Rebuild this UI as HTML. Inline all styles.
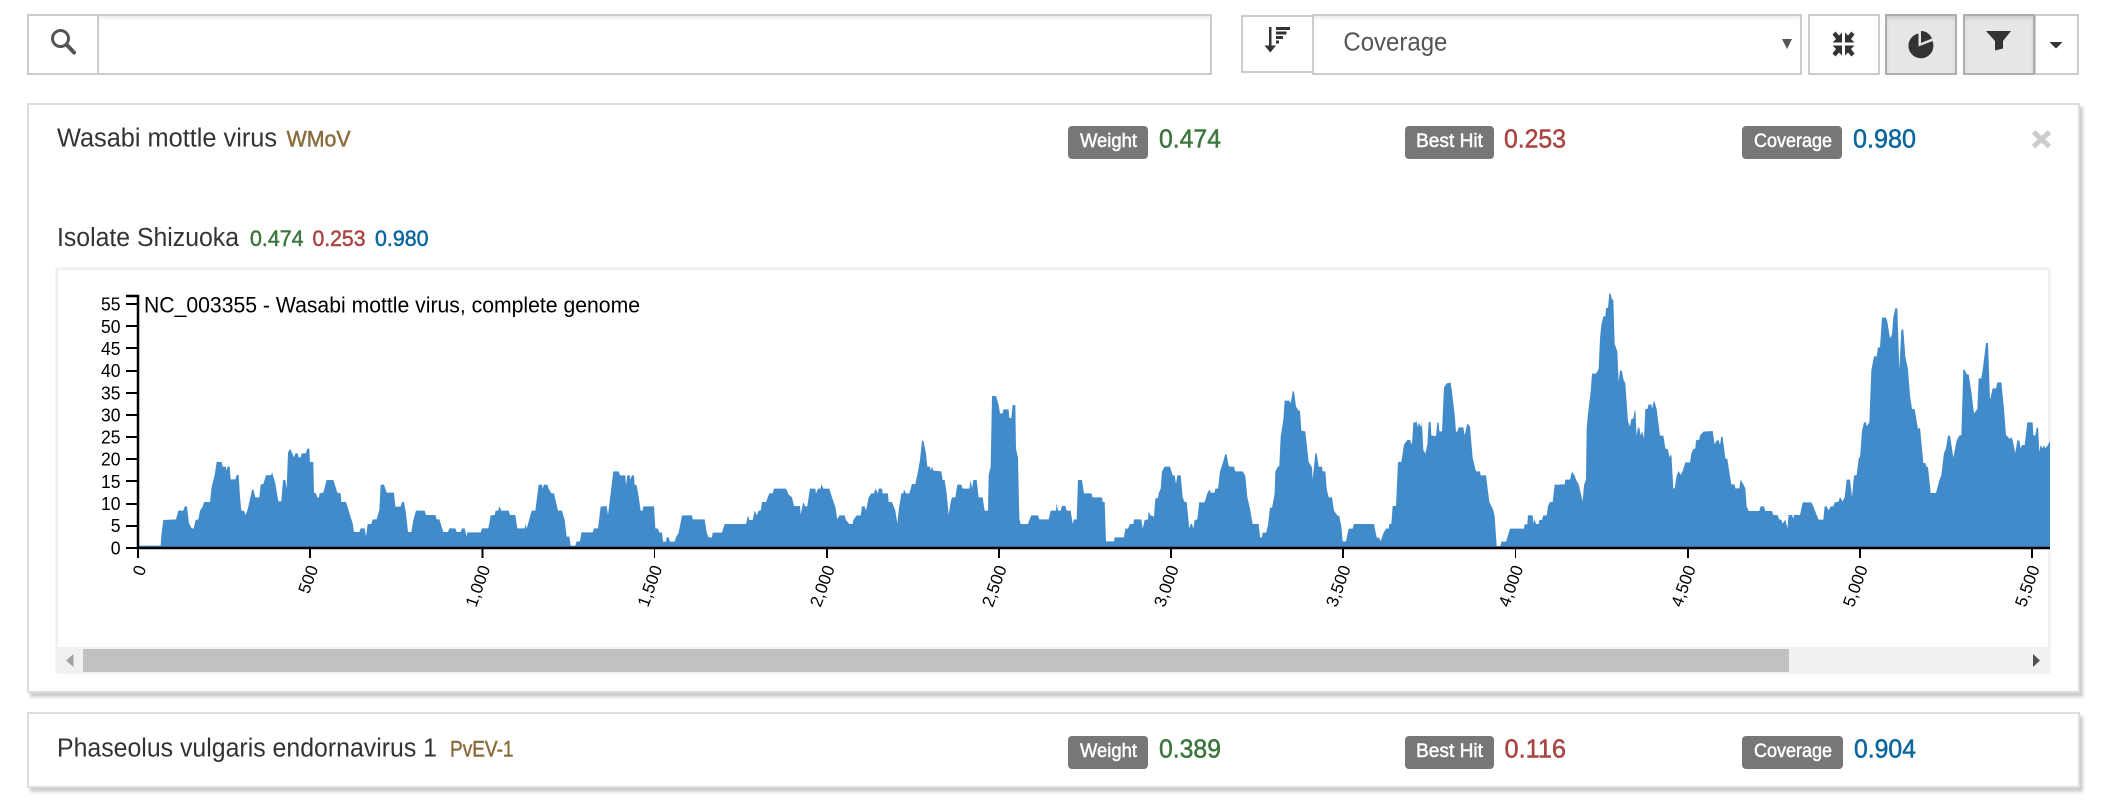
<!DOCTYPE html>
<html lang="en">
<head>
<meta charset="utf-8">
<title>Virus results</title>
<style>
html,body{margin:0;padding:0;background:#fff;width:2105px;height:803px;overflow:hidden;font-family:"Liberation Sans",sans-serif}
.b{position:absolute;box-sizing:border-box;border:2px solid #ccc;background:#fff}
.in{box-shadow:inset 0 3px 3px -1px rgba(0,0,0,.08)}
.on{background:#e6e6e6;border-color:#adadad;box-shadow:inset 0 3px 4px -1px rgba(0,0,0,.13)}
.card{position:absolute;box-sizing:border-box;left:27px;width:2053px;border:2px solid #ddd;background:#fff;box-shadow:3px 4px 3px rgba(0,0,0,.2)}
.panel{position:absolute;box-sizing:border-box;left:56px;top:268px;width:1994px;height:405px;background:#fff;border:2px solid #f0f0f0;box-shadow:0 0 2px rgba(0,0,0,.1)}
.track{position:absolute;left:56px;top:647px;width:1994px;height:26px;background:#f1f1f1}
.thumb{position:absolute;left:83px;top:649px;width:1706px;height:23px;background:#c1c1c1}
svg{position:absolute;left:0;top:0}
text{font-family:"Liberation Sans",sans-serif}
.m{stroke-width:.5px;paint-order:stroke}
</style>
</head>
<body>
<div class="b" style="left:27px;top:14px;width:72px;height:61px"></div>
<div class="b in" style="left:97px;top:14px;width:1115px;height:61px"></div>
<div class="b" style="left:1241px;top:15px;width:73px;height:58px"></div>
<div class="b in" style="left:1312px;top:14px;width:490px;height:61px"></div>
<div class="b" style="left:1808px;top:14px;width:72px;height:61px"></div>
<div class="b on" style="left:1885px;top:14px;width:72px;height:61px"></div>
<div class="b" style="left:2034px;top:14px;width:45px;height:61px"></div>
<div class="b on" style="left:1963px;top:14px;width:72px;height:61px"></div>

<div class="card" style="top:103px;height:590px"></div>
<div class="card" style="top:712px;height:76px"></div>
<div class="panel"></div>
<div class="track"></div>
<div class="thumb"></div>

<svg width="2105" height="803" viewBox="0 0 2105 803" xmlns="http://www.w3.org/2000/svg">
<!-- search icon -->
<circle cx="60.5" cy="38.5" r="8" fill="none" stroke="#555" stroke-width="3"/>
<path d="M66.5 44.5L74 52.5" stroke="#555" stroke-width="4" stroke-linecap="round" fill="none"/>
<!-- sort icon -->
<g fill="#333">
<rect x="1269" y="27" width="2.5" height="21"/>
<path d="M1264.5 45.5h11.5l-5.7 7z"/>
<rect x="1276" y="27" width="14" height="3"/>
<rect x="1276" y="31.5" width="10.5" height="3"/>
<rect x="1276" y="36" width="7" height="3"/>
<rect x="1276" y="40.5" width="3" height="3"/>
</g>
<text x="1343.4" y="50.7" font-size="26" fill="#555" textLength="104" lengthAdjust="spacingAndGlyphs">Coverage</text>
<path d="M1782 39h10l-5 10z" fill="#555"/>
<!-- compress icon -->
<g fill="#333" transform="translate(1843.5 44)">
<path d="M-1.5-1.5V-11.5L-4.5-8.5-8-12.5-11-9.5-7.5-5-11-1.5Z"/>
<path d="M1.5-1.5V-11.5L4.5-8.5 8-12.5 11-9.5 7.5-5 11-1.5Z"/>
<path d="M-1.5 1.5V11.5L-4.5 8.5-8 12.5-11 9.5-7.5 5-11 1.5Z"/>
<path d="M1.5 1.5V11.5L4.5 8.5 8 12.5 11 9.5 7.5 5 11 1.5Z"/>
</g>
<!-- pie icon -->
<path d="M1918.5 33.5A12.5 12.5 0 1 0 1932.5 41L1918.5 46.5Z" fill="#333"/>
<path d="M1921 31A12 12 0 0 1 1932 38.5L1921 43Z" fill="#333"/>
<!-- filter icon -->
<path d="M1986 31H2011L2003 41V48.5L1995 50.5V41Z" fill="#333"/>
<!-- caret -->
<path d="M2049.5 42H2062.5L2056 48.5Z" fill="#333"/>

<!-- card 1 header -->
<text x="57" y="146.7" font-size="25.5" fill="#333" textLength="220" lengthAdjust="spacingAndGlyphs">Wasabi mottle virus</text>
<text x="286.6" y="146.7" font-size="22" fill="#8a6d3b" stroke="#8a6d3b" class="m" textLength="64" lengthAdjust="spacingAndGlyphs">WMoV</text>

<rect x="1068" y="126" width="80" height="33" rx="4" fill="#777"/>
<text x="1080" y="147" font-size="19.5" fill="#fff" stroke="#fff" class="m" textLength="57" lengthAdjust="spacingAndGlyphs">Weight</text>
<text x="1159" y="147.7" font-size="26" fill="#3c763d" stroke="#3c763d" class="m" textLength="62" lengthAdjust="spacingAndGlyphs">0.474</text>
<rect x="1405" y="126" width="89" height="33" rx="4" fill="#777"/>
<text x="1416" y="147" font-size="19.5" fill="#fff" stroke="#fff" class="m" textLength="67" lengthAdjust="spacingAndGlyphs">Best Hit</text>
<text x="1504" y="147.7" font-size="26" fill="#a94442" stroke="#a94442" class="m" textLength="62" lengthAdjust="spacingAndGlyphs">0.253</text>
<rect x="1742" y="126" width="100" height="33" rx="4" fill="#777"/>
<text x="1754" y="147" font-size="19.5" fill="#fff" stroke="#fff" class="m" textLength="78" lengthAdjust="spacingAndGlyphs">Coverage</text>
<text x="1853" y="147.7" font-size="26" fill="#0a669e" stroke="#0a669e" class="m" textLength="63" lengthAdjust="spacingAndGlyphs">0.980</text>
<path d="M2033.5 132L2049.5 146.5M2049.5 132L2033.5 146.5" stroke="#ccc" stroke-width="5" fill="none"/>

<text x="57" y="246" font-size="25.5" fill="#333" textLength="182" lengthAdjust="spacingAndGlyphs">Isolate Shizuoka</text>
<text x="250" y="246" font-size="22" fill="#3c763d" stroke="#3c763d" class="m" textLength="53.5" lengthAdjust="spacingAndGlyphs">0.474</text>
<text x="312.5" y="246" font-size="22" fill="#a94442" stroke="#a94442" class="m" textLength="53" lengthAdjust="spacingAndGlyphs">0.253</text>
<text x="375" y="246" font-size="22" fill="#0a669e" stroke="#0a669e" class="m" textLength="53.5" lengthAdjust="spacingAndGlyphs">0.980</text>

<!-- coverage area -->
<g fill="#428bca">
<polygon transform="translate(130 380) scale(.33333)" points="26,503 26,497 92,497 94,465 100,420 138,418 145,392 160,392 165,378 171,380 177,430 185,445 191,445 197,420 205,418 210,392 218,380 222,366 240,366 245,320 254,285 260,246 275,246 278,260 287,260 289,272 293,260 299,260 302,298 316,298 320,285 326,285 330,350 334,392 342,392 346,405 352,392 358,366 366,330 370,328 376,352 388,352 392,314 400,312 408,286 424,285 426,276 436,310 445,364 454,364 459,300 466,300 470,326 474,218 480,206 486,218 492,232 496,220 503,220 506,232 512,232 515,220 527,220 532,206 538,206 540,246 550,246 552,338 558,340 562,352 567,352 569,340 580,338 590,300 610,300 622,338 632,340 634,366 648,366 656,392 668,430 672,456 688,456 692,445 704,445 708,470 713,432 724,432 728,418 740,418 748,390 752,314 762,314 770,338 792,338 796,380 812,380 816,366 822,366 828,400 834,456 844,456 850,420 858,392 884,392 888,405 916,405 920,418 928,418 940,456 954,456 958,445 976,445 980,456 992,456 996,445 1004,445 1010,470 1012,457 1052,457 1056,445 1075,445 1082,406 1094,405 1097,392 1105,392 1108,378 1114,392 1136,392 1140,405 1156,405 1162,445 1184,445 1186,432 1190,445 1194,432 1205,392 1216,392 1226,314 1236,314 1238,326 1242,314 1252,314 1256,326 1264,340 1272,340 1284,392 1296,392 1304,420 1310,470 1318,470 1322,497 1336,497 1340,484 1350,484 1354,457 1388,457 1392,445 1404,445 1412,380 1430,378 1434,405 1442,340 1450,274 1466,274 1470,286 1486,286 1488,316 1492,286 1500,286 1500,503"/>
<polygon transform="translate(630 380) scale(.33333)" points="0,503 0,300 6,286 12,286 14,314 20,316 26,350 32,392 38,392 40,379 72,379 76,445 84,446 88,458 96,458 99,485 108,485 110,472 116,472 120,485 134,485 138,472 146,458 156,406 186,406 188,418 224,418 230,458 236,472 246,472 248,458 276,458 284,432 348,432 354,406 358,420 368,420 374,392 380,406 386,392 392,392 396,366 408,366 418,340 428,340 432,326 468,326 476,344 486,352 492,378 510,378 512,404 520,366 526,380 532,378 540,326 556,326 558,340 564,326 572,326 574,312 580,326 598,326 606,352 616,380 622,418 628,406 644,406 648,420 658,432 668,432 670,420 680,406 692,406 696,379 704,379 708,392 716,352 724,340 732,340 736,326 744,340 746,326 756,326 758,340 774,340 776,366 786,366 796,392 802,430 806,392 814,340 820,340 822,328 828,340 838,340 846,312 856,312 864,274 870,240 876,182 880,182 888,220 892,260 900,260 902,272 906,260 910,272 934,274 938,300 944,300 950,340 956,404 962,366 966,352 976,352 982,314 994,314 998,326 1018,326 1022,300 1026,326 1030,300 1040,300 1046,352 1058,352 1060,366 1064,392 1074,392 1076,286 1082,260 1086,48 1098,48 1106,75 1110,100 1118,100 1120,88 1136,88 1138,114 1144,114 1148,75 1156,75 1158,206 1164,234 1168,415 1172,432 1194,432 1198,420 1204,406 1224,406 1228,418 1256,418 1262,392 1278,392 1280,370 1284,392 1292,392 1296,378 1306,378 1310,392 1322,392 1328,432 1332,418 1340,418 1344,300 1356,300 1362,340 1384,340 1388,352 1416,352 1418,366 1424,366 1428,484 1452,484 1454,472 1482,472 1486,446 1494,446 1500,432 1500,503"/>
<polygon transform="translate(1130 370) scale(.33333)" points="0,534 0,462 10,462 12,448 34,448 38,476 44,450 54,448 56,424 62,436 72,440 76,385 84,384 86,370 92,356 96,304 104,290 120,290 128,316 134,316 138,342 142,316 152,316 158,382 164,396 170,396 178,476 182,462 186,462 190,476 194,450 202,448 208,396 220,398 224,396 232,370 238,358 242,368 254,368 256,356 264,356 270,304 278,280 286,252 290,254 296,288 302,290 312,290 316,304 338,304 346,318 352,382 360,416 368,462 386,462 390,502 396,502 398,488 408,488 414,466 420,412 426,414 434,370 436,304 444,290 448,288 452,200 460,150 464,92 478,92 482,100 488,64 492,64 498,110 506,122 510,122 514,182 526,184 536,276 546,292 548,328 556,250 560,250 566,290 576,290 578,304 586,304 590,356 596,382 606,382 612,422 622,436 628,438 634,470 638,514 648,514 656,476 668,476 672,462 732,462 740,502 748,504 752,514 760,490 768,476 776,476 778,462 784,462 788,408 798,408 804,276 814,276 822,224 832,210 840,210 846,224 850,158 860,156 864,172 866,158 874,172 876,156 880,240 886,250 892,224 896,156 902,156 904,196 914,198 918,198 922,158 926,158 928,184 936,184 942,52 950,40 962,38 966,66 974,134 978,186 982,184 986,172 1000,172 1004,196 1012,160 1020,170 1028,264 1038,304 1050,304 1052,316 1068,316 1078,396 1090,420 1094,440 1100,528 1112,528 1114,515 1128,515 1136,490 1140,476 1182,476 1184,462 1192,464 1194,436 1208,436 1210,460 1214,448 1218,462 1226,462 1228,450 1236,450 1240,436 1250,436 1254,408 1260,396 1268,396 1274,344 1290,344 1290,534"/>
<polygon transform="translate(1560 285) scale(.33333)" points="0,789 0,598 14,598 16,584 30,584 36,560 44,572 48,584 56,598 62,624 68,648 72,600 78,584 80,430 84,386 92,320 96,266 108,266 116,252 120,160 124,120 130,94 136,94 138,70 144,68 148,26 152,26 156,44 160,44 164,176 172,200 176,290 180,256 186,258 190,282 196,296 204,410 210,424 214,402 220,400 224,376 226,376 230,452 234,428 238,428 242,452 246,438 252,460 256,372 262,372 266,358 274,358 276,372 282,346 290,372 300,452 310,452 316,490 324,494 328,516 334,508 340,610 344,610 350,572 356,558 362,570 368,558 376,532 390,532 394,506 400,492 406,490 408,466 418,464 420,452 430,440 458,438 464,478 470,466 476,466 480,480 484,454 488,456 496,520 502,522 510,574 514,598 524,598 526,610 538,610 542,584 550,598 556,610 560,664 566,678 598,678 602,664 612,664 616,678 636,678 640,690 652,690 658,704 664,704 668,716 676,704 682,730 686,690 696,690 700,702 702,690 720,690 728,652 754,652 760,664 770,690 776,704 790,704 794,664 800,664 806,676 812,664 820,664 824,652 836,650 840,636 848,650 854,636 860,584 870,584 876,636 882,572 890,570 896,520 900,516 906,438 912,412 918,412 920,424 928,412 934,256 942,214 950,214 954,188 960,186 966,98 978,98 982,110 990,160 996,148 1000,96 1006,70 1012,70 1018,254 1024,134 1030,134 1036,214 1044,254 1050,332 1056,372 1064,372 1074,432 1080,428 1090,534 1096,534 1100,546 1104,546 1112,624 1128,624 1138,586 1144,570 1152,504 1158,490 1164,452 1170,452 1180,518 1190,466 1198,452 1204,450 1210,254 1214,254 1220,268 1226,268 1234,320 1242,386 1252,372 1256,280 1264,280 1270,240 1278,174 1284,174 1290,344 1298,310 1308,310 1312,292 1324,292 1332,372 1338,450 1350,462 1354,456 1358,466 1366,504 1372,466 1378,466 1382,490 1386,480 1394,480 1402,412 1418,412 1420,450 1426,452 1430,428 1434,428 1438,500 1442,480 1448,490 1452,480 1456,490 1464,480 1470,468 1470,789"/>
</g>

<!-- axes -->
<g stroke="#000" stroke-width="2" fill="none">
<path d="M126 296H138V548H2050" stroke-width="2.5"/>
<path d="M126 304H138M126 326H138M126 348H138M126 371H138M126 393H138M126 415H138M126 437H138M126 459H138M126 481H138M126 504H138M126 526H138M126 548H138"/>
<path d="M138 548V558M310 548V558M482.5 548V558M827 548V558M999 548V558M1171 548V558M1343 548V558M1688 548V558M1860 548V558M2032 548V558"/>
<path d="M654.5 548V558M1515.5 548V558" stroke-width="1"/>
</g>
<g font-size="18.5" fill="#000" text-anchor="end">
<text x="120.5" y="310.7" textLength="19.5" lengthAdjust="spacingAndGlyphs">55</text>
<text x="120.5" y="332.8" textLength="19.5" lengthAdjust="spacingAndGlyphs">50</text>
<text x="120.5" y="355" textLength="19.5" lengthAdjust="spacingAndGlyphs">45</text>
<text x="120.5" y="377.1" textLength="19.5" lengthAdjust="spacingAndGlyphs">40</text>
<text x="120.5" y="399.3" textLength="19.5" lengthAdjust="spacingAndGlyphs">35</text>
<text x="120.5" y="421.4" textLength="19.5" lengthAdjust="spacingAndGlyphs">30</text>
<text x="120.5" y="443.6" textLength="19.5" lengthAdjust="spacingAndGlyphs">25</text>
<text x="120.5" y="465.7" textLength="19.5" lengthAdjust="spacingAndGlyphs">20</text>
<text x="120.5" y="487.9" textLength="19.5" lengthAdjust="spacingAndGlyphs">15</text>
<text x="120.5" y="510" textLength="19.5" lengthAdjust="spacingAndGlyphs">10</text>
<text x="120.5" y="532.2" textLength="9.8" lengthAdjust="spacingAndGlyphs">5</text>
<text x="120.5" y="554.4" textLength="9.8" lengthAdjust="spacingAndGlyphs">0</text>
</g>
<g font-size="17" fill="#000" text-anchor="end">
<text transform="translate(146.5 568) rotate(-70)">0</text>
<text transform="translate(318.5 568) rotate(-70)">500</text>
<text transform="translate(490.5 568) rotate(-70)">1,000</text>
<text transform="translate(662.5 568) rotate(-70)">1,500</text>
<text transform="translate(835 568) rotate(-70)">2,000</text>
<text transform="translate(1007 568) rotate(-70)">2,500</text>
<text transform="translate(1179 568) rotate(-70)">3,000</text>
<text transform="translate(1351 568) rotate(-70)">3,500</text>
<text transform="translate(1523.5 568) rotate(-70)">4,000</text>
<text transform="translate(1696 568) rotate(-70)">4,500</text>
<text transform="translate(1868 568) rotate(-70)">5,000</text>
<text transform="translate(2040 568) rotate(-70)">5,500</text>
</g>
<text x="144" y="312.7" font-size="22" fill="#000" textLength="496" lengthAdjust="spacingAndGlyphs">NC_003355 - Wasabi mottle virus, complete genome</text>

<!-- scrollbar arrows -->
<path d="M73.5 654V667L66 660.5Z" fill="#a3a3a3"/>
<path d="M2033 654V667L2040 660.5Z" fill="#505050"/>

<!-- card 2 header -->
<text x="57" y="756.7" font-size="25.5" fill="#333" textLength="380" lengthAdjust="spacingAndGlyphs">Phaseolus vulgaris endornavirus 1</text>
<text x="450" y="756.7" font-size="22" fill="#8a6d3b" stroke="#8a6d3b" class="m" textLength="63.5" lengthAdjust="spacingAndGlyphs">PvEV-1</text>

<rect x="1068" y="736" width="80" height="33" rx="4" fill="#777"/>
<text x="1080" y="757" font-size="19.5" fill="#fff" stroke="#fff" class="m" textLength="57" lengthAdjust="spacingAndGlyphs">Weight</text>
<text x="1159" y="757.7" font-size="26" fill="#3c763d" stroke="#3c763d" class="m" textLength="62" lengthAdjust="spacingAndGlyphs">0.389</text>
<rect x="1405" y="736" width="89" height="33" rx="4" fill="#777"/>
<text x="1416" y="757" font-size="19.5" fill="#fff" stroke="#fff" class="m" textLength="67" lengthAdjust="spacingAndGlyphs">Best Hit</text>
<text x="1504.5" y="757.7" font-size="26" fill="#a94442" stroke="#a94442" class="m" textLength="61.5" lengthAdjust="spacingAndGlyphs">0.116</text>
<rect x="1742" y="736" width="101" height="33" rx="4" fill="#777"/>
<text x="1754" y="757" font-size="19.5" fill="#fff" stroke="#fff" class="m" textLength="78" lengthAdjust="spacingAndGlyphs">Coverage</text>
<text x="1854" y="757.7" font-size="26" fill="#0a669e" stroke="#0a669e" class="m" textLength="62" lengthAdjust="spacingAndGlyphs">0.904</text>
</svg>
</body>
</html>
